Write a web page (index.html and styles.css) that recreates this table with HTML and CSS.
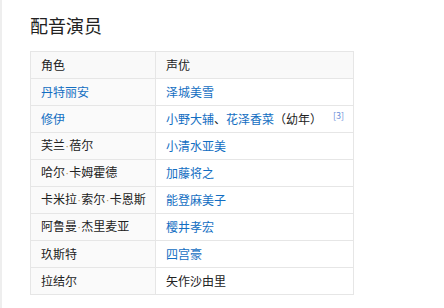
FILE: index.html
```html
<!DOCTYPE html>
<html lang="zh-CN">
<head>
<meta charset="utf-8">
<link rel="stylesheet" href="styles.css">
</head>
<body>
<div class="page">
  <h2 class="title">配音演员</h2>
  <table class="cast">
    <colgroup><col class="c-role"><col class="c-cv"></colgroup>
    <thead>
      <tr><th>角色</th><th>声优</th></tr>
    </thead>
    <tbody>
      <tr><td><a>丹特丽安</a></td><td><a>泽城美雪</a></td></tr>
      <tr><td><a>修伊</a></td><td><a>小野大辅</a>、<a>花泽香菜</a>（幼年）<sup class="ref">[3]</sup></td></tr>
      <tr><td>芙兰<span class="dot">·</span>蓓尔</td><td><a>小清水亚美</a></td></tr>
      <tr><td>哈尔<span class="dot">·</span>卡姆霍德</td><td><a>加藤将之</a></td></tr>
      <tr><td>卡米拉<span class="dot">·</span>索尔<span class="dot">·</span>卡恩斯</td><td><a>能登麻美子</a></td></tr>
      <tr><td>阿鲁曼<span class="dot">·</span>杰里麦亚</td><td><a>樱井孝宏</a></td></tr>
      <tr><td>玖斯特</td><td><a>四宫豪</a></td></tr>
      <tr><td>拉结尔</td><td>矢作沙由里</td></tr>
    </tbody>
  </table>
</div>
</body>
</html>
```
FILE: styles.css
```css
html, body {
  margin: 0;
  padding: 0;
  background: #fff;
}
.page {
  box-sizing: border-box;
  height: 308px;
  border-left: 2px solid #eeeeee;
  padding: 13px 0 0 28px;
  font-family: "Noto Sans CJK SC", "Noto Sans", sans-serif;
  color: #222;
}
.title {
  margin: 0 0 14px 0;
  font-size: 18px;
  line-height: 24px;
  font-weight: normal;
  color: #222;
}
.cast {
  border-collapse: collapse;
  table-layout: fixed;
  width: 323px;
  font-size: 12px;
  line-height: 16px;
}
.c-role { width: 125px; }
.c-cv { width: 198px; }
.cast th, .cast td {
  border: 1px solid #e6e6e6;
  height: 26px;
  padding: 0 10px;
  text-align: left;
  font-weight: normal;
  vertical-align: middle;
  white-space: nowrap;
  overflow: visible;
}
.cast th {
  background: #f9f9f9;
  color: #222;
}
.cast td:first-child {
  background: #fafafa;
}
.cast a {
  color: #136ec2;
  text-decoration: none;
}
.dot {
  font-family: "Liberation Sans", sans-serif;
  color: #b0863c;
  font-size: 10px;
  margin: 0 0.5px;
}
.ref {
  font-size: 9px;
  color: #6b8fd8;
  margin-left: 11px;
  vertical-align: 5px;
  line-height: 0;
}
```
